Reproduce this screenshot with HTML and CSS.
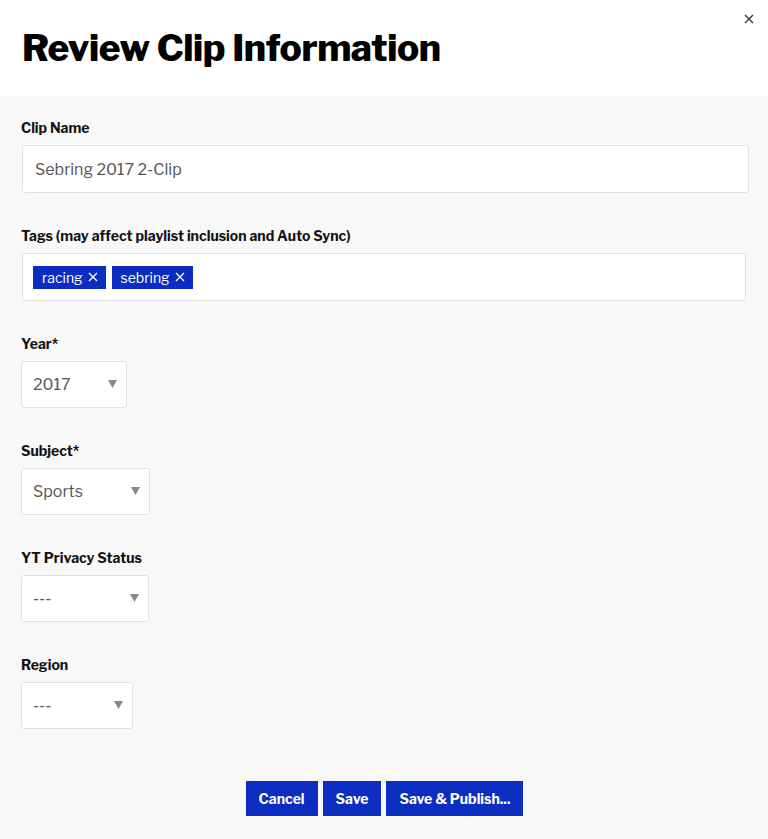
FILE: index.html
```html
<!DOCTYPE html>
<html>
<head>
<meta charset="utf-8">
<link rel="stylesheet" href="styles.css">
</head>
<body>
<div class="modal">
  <header class="modal-header">
    <h1 class="title">Review Clip Information</h1>
    <button class="close" aria-label="Close">
      <svg width="10" height="10" viewBox="0 0 10 10"><path d="M1 1L9 9M9 1L1 9" stroke="#333" stroke-width="1.3" fill="none"/></svg>
    </button>
  </header>
  <main class="modal-body">
    <div class="field">
      <label class="label">Clip Name</label>
      <div class="input input-wide">Sebring 2017 2-Clip</div>
    </div>
    <div class="field">
      <label class="label">Tags (may affect playlist inclusion and Auto Sync)</label>
      <div class="tags">
        <span class="tag">racing <svg width="10" height="10" viewBox="0 0 10 10"><path d="M1 1L9 9M9 1L1 9" stroke="#fff" stroke-width="1.3" fill="none"/></svg></span>
        <span class="tag">sebring <svg width="10" height="10" viewBox="0 0 10 10"><path d="M1 1L9 9M9 1L1 9" stroke="#fff" stroke-width="1.3" fill="none"/></svg></span>
      </div>
    </div>
    <div class="field">
      <label class="label">Year*</label>
      <div class="select select-year"><span>2017</span><svg class="arrow" width="9" height="8" viewBox="0 0 9 8"><path d="M0 0H9L4.5 8Z" fill="#888"/></svg></div>
    </div>
    <div class="field">
      <label class="label">Subject*</label>
      <div class="select select-subject"><span>Sports</span><svg class="arrow" width="9" height="8" viewBox="0 0 9 8"><path d="M0 0H9L4.5 8Z" fill="#888"/></svg></div>
    </div>
    <div class="field">
      <label class="label">YT Privacy Status</label>
      <div class="select select-privacy"><span>---</span><svg class="arrow" width="9" height="8" viewBox="0 0 9 8"><path d="M0 0H9L4.5 8Z" fill="#888"/></svg></div>
    </div>
    <div class="field">
      <label class="label">Region</label>
      <div class="select select-region"><span>---</span><svg class="arrow" width="9" height="8" viewBox="0 0 9 8"><path d="M0 0H9L4.5 8Z" fill="#888"/></svg></div>
    </div>
    <div class="actions">
      <button class="btn">Cancel</button>
      <button class="btn">Save</button>
      <button class="btn">Save &amp; Publish...</button>
    </div>
  </main>
</div>
</body>
</html>
```
FILE: styles.css
```css
* { box-sizing: border-box; }
html, body { margin: 0; padding: 0; }
body {
  font-family: "Libre Franklin", Roboto, "Liberation Sans", sans-serif;
  color: #111;
  background: #f8f8f8;
}
.modal { width: 768px; min-height: 839px; display: flex; flex-direction: column; }
.modal-header {
  background: #fff;
  height: 96px;
  display: flex;
  justify-content: space-between;
  align-items: flex-start;
  padding: 0 14px 0 22px;
}
.title {
  margin: 26px 0 0;
  font-size: 37px;
  font-weight: 800;
  letter-spacing: -0.4px;
  line-height: 44px;
  color: #000;
}
.close {
  margin-top: 14px;
  background: none;
  border: 0;
  padding: 0;
  width: 10px;
  height: 10px;
  display: flex;
}
.modal-body {
  flex: 1;
  background: #f8f8f8;
  padding: 22px 20px 23px 21px;
  display: flex;
  flex-direction: column;
}
.field { display: flex; flex-direction: column; align-items: flex-start; margin-bottom: 33px; }
.label {
  font-size: 14px;
  font-weight: 700;
  line-height: 20px;
  margin-bottom: 7px;
  color: #111;
}
.input {
  height: 48px;
  background: #fff;
  border: 1px solid #e2e2e2;
  border-radius: 3px;
  font-size: 16px;
  color: #555;
  padding: 0 12px;
  display: flex;
  align-items: center;
}
.input-wide { width: 727px; margin-left: 1px; }
.tags {
  width: 724px;
  margin-left: 1px;
  height: 48px;
  background: #fff;
  border: 1px solid #e2e2e2;
  border-radius: 2px;
  display: flex;
  align-items: center;
  gap: 6px;
  padding: 0 10px;
}
.tag {
  background: #0b2dc0;
  color: #fff;
  font-size: 14px;
  height: 23px;
  padding: 0 8px 0 9px;
  display: inline-flex;
  align-items: center;
  gap: 5px;
}
.select {
  height: 47px;
  background: #fff;
  border: 1px solid #e2e2e2;
  border-radius: 3px;
  font-size: 16px;
  color: #555;
  padding: 0 9px 0 11px;
  display: flex;
  align-items: center;
  justify-content: space-between;
}
.arrow { display: block; margin-top: -2px; }
.select-year { width: 106px; }
.select-subject { width: 129px; }
.select-privacy { width: 128px; }
.select-region { width: 112px; }
.actions {
  margin-top: auto;
  display: flex;
  justify-content: center;
  gap: 5px;
}
.btn {
  height: 35px;
  background: #0b2dc0;
  color: #fff;
  border: 0;
  font-family: inherit;
  font-size: 14px;
  font-weight: 700;
  padding: 0 13px;
}
```
